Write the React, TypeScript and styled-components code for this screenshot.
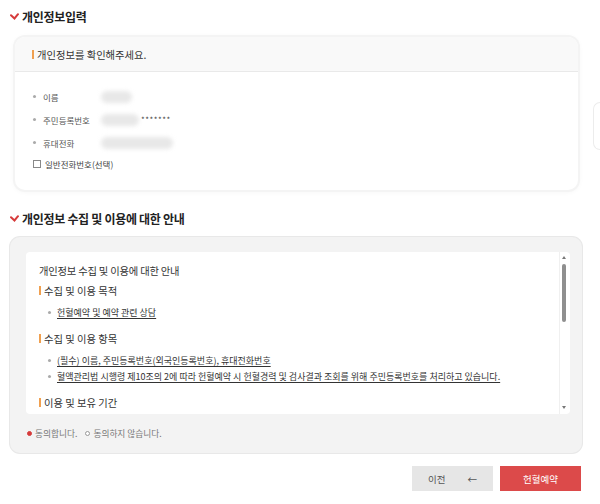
import styled, { createGlobalStyle } from "styled-components";

const Global = createGlobalStyle`
  body {
    margin: 0;
    background: #fff;
    font-family: "Noto Sans CJK KR", "Noto Sans", sans-serif;
    color: #333;
    overflow: hidden;
  }
`;

const Page = styled.div`
  position: relative;
  width: 572px;
  padding: 6px 0 0 10px;
`;

const Heading = styled.h2`
  display: flex;
  align-items: center;
  gap: 3px;
  margin: 0;
  height: 20px;
  font-size: 12px;
  font-weight: 700;
  color: #222;
  letter-spacing: -0.3px;
`;

const InfoCard = styled.div`
  margin: 11px 4px 0 5px;
  border-radius: 10px;
  background: #fff;
  box-shadow: 0 0 0 2px #f4f4f4, 0 1px 6px rgba(0, 0, 0, 0.06);
  overflow: hidden;
`;

const CardHead = styled.div`
  display: flex;
  align-items: center;
  height: 34px;
  padding-left: 17px;
  background: #f9f9f9;
  border-bottom: 1px solid #e9e9e9;
  font-size: 10.3px;
  color: #333;
`;

const Bar = styled.span`
  display: inline-block;
  width: 2px;
  height: 9px;
  margin-right: 3px;
  background: #f0a050;
`;

const CardBody = styled.div`
  display: flex;
  flex-direction: column;
  padding: 13px 0 16px 18px;
`;

const Row = styled.div<{ $short?: boolean }>`
  display: flex;
  align-items: center;
  height: ${(p) => (p.$short ? 20 : 23)}px;
  font-size: 8.5px;
  color: #555;
`;

const Dot = styled.span`
  width: 3px;
  height: 3px;
  border-radius: 50%;
  background: #aaa;
  margin-right: 7px;
`;

const Label = styled.span`
  width: 58px;
`;

const Blur = styled.span<{ $w: number }>`
  display: inline-block;
  width: ${(p) => p.$w}px;
  height: 12px;
  border-radius: 6px;
  background: #e8e8e8;
  filter: blur(2px);
`;

const Mask = styled.span`
  margin-left: 2px;
  font-size: 8px;
  letter-spacing: 0.5px;
  color: #444;
`;

const Check = styled.span`
  width: 6px;
  height: 6px;
  border: 1px solid #888;
  margin-right: 4px;
`;

const CheckLabel = styled.span`
  font-size: 8.5px;
  color: #444;
`;

const Heading2 = styled(Heading)`
  margin-top: 18px;
`;

const GuideCard = styled.div`
  margin-top: 9px;
  padding: 15px 12px 0 16px;
  border-radius: 10px;
  background: #f3f3f3;
  box-shadow: 0 0 0 1px #e8e8e8;
  height: 216px;
  box-sizing: border-box;
`;

const ScrollBox = styled.div`
  position: relative;
  display: flex;
  height: 162px;
  background: #fff;
  border-radius: 4px;
  overflow: hidden;
`;

const ScrollText = styled.div`
  flex: 1;
  padding: 9px 0 0 13px;
`;

const BoxTitle = styled.div`
  font-size: 10.3px;
  color: #333;
  height: 19px;
  line-height: 19px;
  letter-spacing: -0.2px;
`;

const SubTitle = styled.div`
  display: flex;
  align-items: center;
  font-size: 10.3px;
  color: #333;
  height: 20px;
`;

const List = styled.ul`
  margin: 0;
  padding: 4px 0 8px 9px;
  list-style: none;
`;

const Item = styled.li`
  display: flex;
  align-items: center;
  height: 16px;
  font-size: 9px;
  color: #333;
  text-decoration: underline;
  text-underline-offset: 1.5px;
  white-space: nowrap;
  &::before {
    content: "";
    width: 3px;
    height: 3px;
    border-radius: 50%;
    background: #aaa;
    margin-right: 6px;
    flex-shrink: 0;
  }
`;

const Scrollbar = styled.div`
  width: 10px;
  position: relative;
  border-left: 1px solid #f0f0f0;
`;

const Arrow = styled.span<{ $down?: boolean }>`
  position: absolute;
  left: 2px;
  ${(p) => (p.$down ? "bottom: 5px;" : "top: 4px;")}
  width: 0;
  height: 0;
  border-left: 2.5px solid transparent;
  border-right: 2.5px solid transparent;
  ${(p) => (p.$down ? "border-top: 3px solid #777;" : "border-bottom: 3px solid #777;")}
`;

const Thumb = styled.span`
  position: absolute;
  left: 2px;
  top: 12px;
  width: 4px;
  height: 58px;
  border-radius: 2px;
  background: #8f8f8f;
`;

const Radios = styled.div`
  display: flex;
  align-items: center;
  height: 38px;
  margin-left: 1px;
  gap: 8px;
  font-size: 8.7px;
  color: #777;
`;

const Radio = styled.span<{ $on?: boolean }>`
  display: inline-flex;
  align-items: center;
  gap: 3px;
  &::before {
    content: "";
    width: 5px;
    height: 5px;
    border-radius: 50%;
    box-sizing: border-box;
    border: 1px solid ${(p) => (p.$on ? "#d63b3b" : "#999")};
    background: ${(p) => (p.$on ? "#d63b3b" : "#fff")};
  }
`;

const Buttons = styled.div`
  display: flex;
  justify-content: flex-end;
  gap: 7px;
  margin: 13px 1px 0 0;
`;

const Button = styled.button<{ $primary?: boolean }>`
  display: flex;
  align-items: center;
  justify-content: center;
  gap: 22px;
  width: 81px;
  height: 25px;
  border: none;
  font-family: inherit;
  font-size: 9.5px;
  color: ${(p) => (p.$primary ? "#fff" : "#555")};
  background: ${(p) => (p.$primary ? "#dc4a4a" : "#e6e6e6")};
`;

/* edge of a floating round button, cut off by the window */
const SideCircle = styled.div`
  position: absolute;
  left: 593px;
  top: 102px;
  width: 7px;
  height: 48px;
  box-sizing: border-box;
  border: 1px solid #ececec;
  border-right: none;
  border-radius: 24px 0 0 24px / 24px 0 0 24px;
`;

const Tick = () => (
  <svg width="9" height="7" viewBox="0 0 9 7">
    <path d="M1 2.2 L4.5 5.5 L8 1.2" stroke="#d63b3b" strokeWidth="2" fill="none" strokeLinecap="round" />
  </svg>
);

export default function App() {
  return (
    <Page>
      <Global />
      <Heading>
        <Tick />
        개인정보입력
      </Heading>
      <InfoCard>
        <CardHead>
          <Bar />
          개인정보를 확인해주세요.
        </CardHead>
        <CardBody>
          <Row>
            <Dot />
            <Label>이름</Label>
            <Blur $w={31} />
          </Row>
          <Row>
            <Dot />
            <Label>주민등록번호</Label>
            <Blur $w={38} />
            <Mask>*******</Mask>
          </Row>
          <Row>
            <Dot />
            <Label>휴대전화</Label>
            <Blur $w={72} />
          </Row>
          <Row $short>
            <Check />
            <CheckLabel>일반전화번호(선택)</CheckLabel>
          </Row>
        </CardBody>
      </InfoCard>

      <Heading2>
        <Tick />
        개인정보 수집 및 이용에 대한 안내
      </Heading2>
      <GuideCard>
        <ScrollBox>
          <ScrollText>
            <BoxTitle>개인정보 수집 및 이용에 대한 안내</BoxTitle>
            <SubTitle>
              <Bar />
              수집 및 이용 목적
            </SubTitle>
            <List>
              <Item>헌혈예약 및 예약 관련 상담</Item>
            </List>
            <SubTitle>
              <Bar />
              수집 및 이용 항목
            </SubTitle>
            <List>
              <Item>(필수) 이름, 주민등록번호(외국인등록번호), 휴대전화번호</Item>
              <Item>혈액관리법 시행령 제10조의 2에 따라 헌혈예약 시 헌혈경력 및 검사결과 조회를 위해 주민등록번호를 처리하고 있습니다.</Item>
            </List>
            <SubTitle>
              <Bar />
              이용 및 보유 기간
            </SubTitle>
          </ScrollText>
          <Scrollbar>
            <Arrow />
            <Thumb />
            <Arrow $down />
          </Scrollbar>
        </ScrollBox>
        <Radios>
          <Radio $on>동의합니다.</Radio>
          <Radio>동의하지 않습니다.</Radio>
        </Radios>
      </GuideCard>
      <Buttons>
        <Button>
          <span>이전</span>
          <span>←</span>
        </Button>
        <Button $primary>헌혈예약</Button>
      </Buttons>
      <SideCircle />
    </Page>
  );
}
